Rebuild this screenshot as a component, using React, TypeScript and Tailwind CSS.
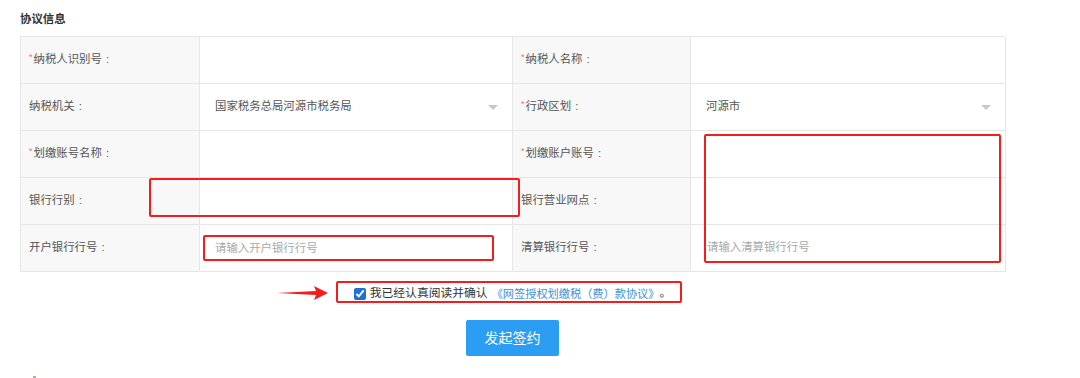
import React from 'react';

type Cell = { label: string; required?: boolean; kind: 'empty' | 'select' | 'input' | 'plain'; value?: string; placeholder?: string };

const rows: [Cell, Cell][] = [
  [
    { label: '纳税人识别号', required: true, kind: 'empty' },
    { label: '纳税人名称', required: true, kind: 'empty' },
  ],
  [
    { label: '纳税机关', kind: 'select', value: '国家税务总局河源市税务局' },
    { label: '行政区划', required: true, kind: 'select', value: '河源市' },
  ],
  [
    { label: '划缴账号名称', required: true, kind: 'empty' },
    { label: '划缴账户账号', required: true, kind: 'empty' },
  ],
  [
    { label: '银行行别', kind: 'empty' },
    { label: '银行营业网点', kind: 'empty' },
  ],
  [
    { label: '开户银行行号', kind: 'input', placeholder: '请输入开户银行行号' },
    { label: '清算银行行号', kind: 'plain', placeholder: '请输入清算银行行号' },
  ],
];

const Caret = () => (
  <span className="w-0 h-0 border-l-[5px] border-r-[5px] border-t-[5px] border-l-transparent border-r-transparent border-t-[#c8c8c8]" />
);

const Label: React.FC<{ cell: Cell }> = ({ cell }) => (
  <div className="h-[47px] bg-[#f8f8f8] border-r border-b border-[#e6e6e6] flex items-center pl-[8px] text-[#555]">
    {cell.required && <span className="text-[#f56c6c] text-[9px] -mt-[4px] mr-[1px]">*</span>}
    <span>{cell.label}</span>
    {/* centred full-width colon */}
    <span className="w-[11.4px] text-center">:</span>
  </div>
);

const Value: React.FC<{ cell: Cell }> = ({ cell }) => {
  if (cell.kind === 'select') {
    return (
      <div className="h-[47px] bg-white border-r border-b border-[#e6e6e6] flex items-center justify-between pl-[15px] pr-[14px] text-[#555]">
        <span>{cell.value}</span>
        <Caret />
      </div>
    );
  }
  if (cell.kind === 'input') {
    return (
      <div className="h-[47px] bg-white border-r border-b border-[#e6e6e6] flex items-center pl-[4px] pr-[18px]">
        <input
          className="w-full h-[24px] border border-[#dcdcdc] rounded-[2px] pl-[10px] text-[#555] placeholder:text-[#a8a8a8] outline-none"
          placeholder={cell.placeholder}
        />
      </div>
    );
  }
  if (cell.kind === 'plain') {
    return (
      <div className="h-[47px] bg-white border-r border-b border-[#e6e6e6] flex items-center pl-[16px]">
        <input className="w-full bg-transparent text-[#555] placeholder:text-[#a8a8a8] outline-none" placeholder={cell.placeholder} />
      </div>
    );
  }
  return <div className="h-[47px] bg-white border-r border-b border-[#e6e6e6]" />;
};

export default function App() {
  return (
    <div
      className="relative w-[1080px] h-[378px] bg-white overflow-hidden text-[11.4px]"
      style={{ fontFamily: "'Liberation Sans', 'Noto Sans CJK SC', sans-serif" }}
    >
      <div className="pl-[20px] w-[1005px]">
        {/* Section title */}
        <div className="h-[36px] pt-[12px] leading-[14px] font-bold text-[#333]">协议信息</div>

        {/* Agreement table */}
        <div className="grid grid-cols-[179px_313px_178px_315px] border-t border-l border-[#e6e6e6]">
          {rows.map((row, i) => (
            <React.Fragment key={i}>
              <Label cell={row[0]} />
              <Value cell={row[0]} />
              <Label cell={row[1]} />
              <Value cell={row[1]} />
            </React.Fragment>
          ))}
        </div>

        {/* Confirm */}
        <div className="mt-[12px] h-[20px] flex items-center justify-center text-[11.8px] text-[#333]">
          <input type="checkbox" defaultChecked className="w-[12px] h-[12px] mr-[4px] accent-[#1e6fd9]" />
          <span>我已经认真阅读并确认</span>
          <a className="ml-[4px] text-[11.2px] text-[#3d8fd9] cursor-pointer">《网签授权划缴税（费）款协议》</a>
          <span>。</span>
        </div>

        <div className="mt-[16px] flex justify-center">
          <button className="w-[93px] h-[36px] rounded-[2px] bg-[#2b9ef4] text-white text-[14px]">发起签约</button>
        </div>
      </div>

      <span className="absolute left-[33px] top-[376px] w-[3px] h-[2px] bg-[#c9a98a]" />

      {/* Red annotations */}
      <div className="absolute left-[149px] top-[178px] w-[371px] h-[39px] border-2 border-[#f41d1d] rounded-[2px]" />
      <div className="absolute left-[203px] top-[235px] w-[291px] h-[26px] border-2 border-[#f41d1d] rounded-[2px]" />
      <div className="absolute left-[704px] top-[134px] w-[297px] h-[129px] border-2 border-[#f41d1d] rounded-[2px]" />
      <div className="absolute left-[336px] top-[281px] w-[346px] h-[22px] border-2 border-[#f41d1d] rounded-[2px]" />
      <svg className="absolute left-[276px] top-[284px]" width="54" height="18" viewBox="0 0 54 18">
        <polygon points="1,9 40,7 38,2 52,9 38,16 40,11" fill="#f41d1d" />
      </svg>
    </div>
  );
}
